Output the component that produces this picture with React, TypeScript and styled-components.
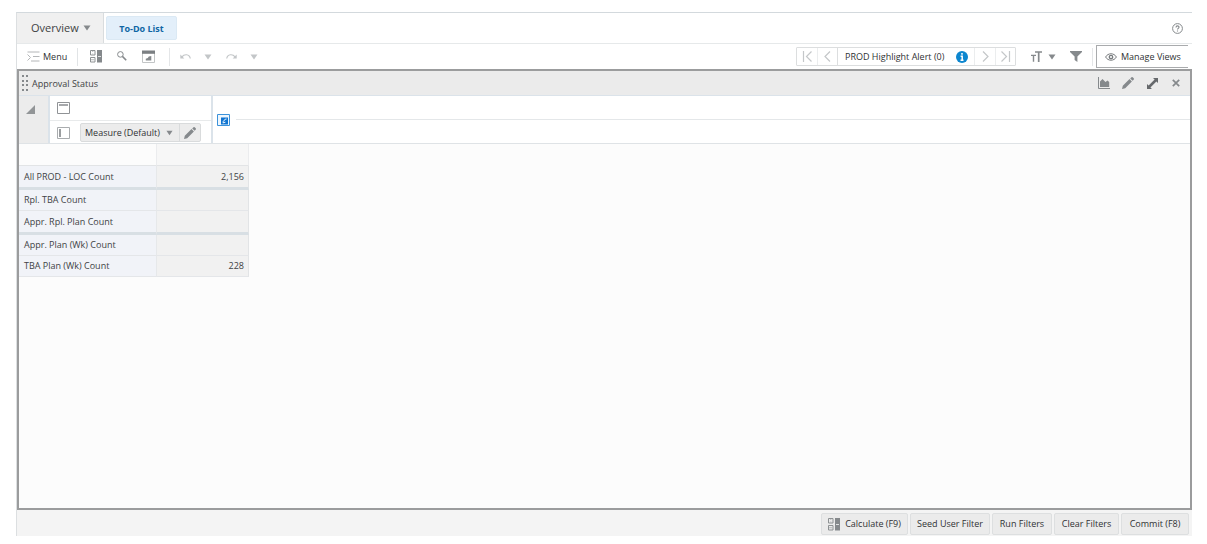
import React from "react";
import styled, { createGlobalStyle } from "styled-components";

const GlobalStyle = createGlobalStyle`
  *, *::before, *::after { box-sizing: border-box; }
  body {
    margin: 0;
    background: #fff;
    color: #404244;
    font: 9px/12px "Open Sans", "Noto Sans", sans-serif;
  }
  button, select { font: inherit; color: inherit; }
  svg { display: block; flex: none; }
`;

const Page = styled.div`
  display: flex;
  flex-direction: column;
  min-height: 100vh;
  padding: 12px 15px 8px 16px;
`;

const Workspace = styled.main`
  flex: 1;
  display: flex;
  flex-direction: column;
  border-top: 1px solid #d3d9dd;
  border-left: 1px solid #dcdfe1;
`;

const TabBar = styled.nav`
  display: flex;
  align-items: stretch;
  height: 31px;
  border-bottom: 1px solid #e6e9ea;
`;

const OverviewTab = styled.button`
  display: flex;
  align-items: center;
  gap: 4px;
  width: 87px;
  padding: 0 0 0 14px;
  border: 0;
  border-right: 1px solid #d9dcde;
  background: #f0f0f0;
  font-size: 11px;
  line-height: 16px;
  white-space: nowrap;
`;

const StepTab = styled.button`
  align-self: center;
  height: 24px;
  width: 71px;
  margin: 0 0 0 2px;
  padding: 2px 0 0;
  border: 1px solid #dbe9f4;
  border-radius: 2px;
  background: #e3effa;
  color: #1066a5;
  font-weight: 700;
  white-space: nowrap;
`;

const Spacer = styled.div`
  flex: 1;
`;

const IconButton = styled.button<{ $width?: number; $tone?: string }>`
  display: flex;
  align-items: center;
  justify-content: center;
  width: ${(p) => p.$width ?? 24}px;
  height: 22px;
  padding: 0;
  border: 0;
  background: none;
  color: ${(p) => p.$tone ?? "#85898c"};
`;

const HelpButton = styled(IconButton)`
  align-self: center;
  margin-right: 3px;
`;

const Toolbar = styled.div`
  display: flex;
  align-items: center;
  height: 25px;
`;

const MenuButton = styled.button`
  display: flex;
  align-items: center;
  gap: 3px;
  width: 61px;
  height: 18px;
  padding: 0 0 0 10px;
  border: 0;
  border-right: 1px solid #e1e4e6;
  background: none;
  color: #303234;
`;

const Divider = styled.span`
  width: 1px;
  height: 18px;
  background: #e4e6e8;
`;

const AlertPager = styled.div`
  display: flex;
  height: 19px;
  margin-right: 12px;
  border: 1px solid #dcdedf;
  border-radius: 1px;
  background: #fff;
`;

const PagerButton = styled.button`
  display: flex;
  align-items: center;
  justify-content: center;
  width: 20px;
  padding: 0;
  border: 0;
  background: none;
  color: #c4c7c9;
  & + & { border-left: 1px solid #ebedee; }
`;

const AlertLabel = styled.div`
  display: flex;
  align-items: center;
  justify-content: space-between;
  width: 138px;
  padding: 0 6px 0 7px;
  border-left: 1px solid #dcdedf;
  border-right: 1px solid #ebedee;
  color: #303234;
  white-space: nowrap;
`;

const ManageViews = styled.button`
  display: flex;
  align-items: center;
  gap: 4px;
  width: 92px;
  height: 23px;
  margin: 0 4px 0 3px;
  padding: 0 0 0 8px;
  border: 1px solid #a9abad;
  border-right: 0;
  background: #fff;
  color: #303234;
  white-space: nowrap;
`;

const Panel = styled.section`
  flex: 1;
  display: flex;
  flex-direction: column;
  border: 2px solid #9b9c9d;
  background: #fcfcfc;
`;

const PanelHeader = styled.header`
  display: flex;
  align-items: center;
  height: 25px;
  padding: 0 2px 0 3px;
  border-bottom: 1px solid #dbe3ea;
  background: #ebebeb;
`;

const PanelTitle = styled.h1`
  margin: 2px 0 0 4px;
  font-size: 9px;
  line-height: 12px;
  font-weight: 400;
`;

const AxisArea = styled.div`
  display: flex;
  height: 48px;
  border-bottom: 1px solid #dfe3e6;
  background: #fff;
`;

const Corner = styled.button`
  display: flex;
  align-items: flex-start;
  justify-content: flex-end;
  width: 31px;
  padding: 9px 13px 0 0;
  border: 0;
  border-right: 2px solid #dbe3ea;
  background: #ececec;
  color: #929597;
`;

const AxisRows = styled.div`
  width: 163px;
  border-right: 2px solid #dbe3ea;
`;

const AxisRow = styled.div`
  display: flex;
  align-items: center;
  gap: 10px;
  height: 24px;
  padding-left: 7px;
  color: #909396;
  & + & { border-top: 1px solid #e8eaeb; }
`;

const MeasureTile = styled.div`
  display: flex;
  height: 19px;
  border: 1px solid #d9dbdc;
  border-radius: 2px;
  background: #ececec;
  color: #303234;
`;

const MeasureButton = styled.button`
  display: flex;
  align-items: center;
  justify-content: space-between;
  width: 99px;
  padding: 0 6px 0 4px;
  border: 0;
  border-right: 1px solid #d9dbdc;
  background: none;
  white-space: nowrap;
`;

const PageAxis = styled.div`
  flex: 1;
  display: flex;
  align-items: center;
  gap: 6px;
  padding-left: 4px;
`;

const AxisLine = styled.span`
  flex: 1;
  height: 1px;
  background: #e4e7e9;
`;

const Grid = styled.table`
  width: 230px;
  border-collapse: separate;
  border-spacing: 0;
  table-layout: fixed;
`;

const LabelHead = styled.th`
  width: 138px;
  height: 22px;
  padding: 0;
  border-right: 1px solid #ebecee;
  border-bottom: 1px solid #e2e4e6;
`;

const ValueHead = styled(LabelHead)`
  width: 92px;
  background: #f7f7f7;
`;

const RowLabel = styled.th<{ $groupEnd?: boolean }>`
  height: ${(p) => (p.$groupEnd ? 24 : 21)}px;
  padding: 0 0 0 5px;
  border-right: 1px solid #e6e8ea;
  border-bottom: ${(p) => (p.$groupEnd ? "3px solid #d8dfe4" : "1px solid #e4e6e9")};
  background: #f1f3f8;
  font-weight: 400;
  text-align: left;
  white-space: nowrap;
`;

const RowValue = styled.td<{ $groupEnd?: boolean }>`
  padding: 0 4px 0 0;
  border-right: 1px solid #e2e4e6;
  border-bottom: ${(p) => (p.$groupEnd ? "3px solid #d8dfe4" : "1px solid #e4e6e9")};
  background: #f1f1f1;
  text-align: right;
`;

const Footer = styled.footer`
  display: flex;
  justify-content: flex-end;
  gap: 2px;
  height: 26px;
  padding: 3px 3px 1px;
  background: #f4f4f4;
`;

const ActionButton = styled.button<{ $width: number }>`
  display: flex;
  align-items: center;
  justify-content: center;
  gap: 4px;
  width: ${(p) => p.$width}px;
  padding: 0;
  border: 1px solid #dddfe0;
  border-radius: 2px;
  background: #ebebeb;
  color: #303234;
  white-space: nowrap;
`;

const IconTone = styled.span`
  color: #85898c;
`;

const TileEdit = styled(IconButton)`
  height: 17px;
`;

const Caret = ({ size = 8 }: { size?: number }) => (
  <svg width={size} height="6" viewBox="0 0 8 6">
    <path d="M0.5 0.5h7L4 5.5z" fill="currentColor" />
  </svg>
);

const CalculateIcon = () => (
  <svg width="13" height="13" viewBox="0 0 13 13" fill="none" stroke="#8d9193">
    <path d="M7 0h5v12.5H7z" fill="#85898c" stroke="none" />
    <path d="M0.5 0.5h4.5v4.5h-4.5zM0.5 7.5h4.5v4.5h-4.5z" />
    <path d="M2.75 1v1M2.75 3.5v1M1 9.75h3.5" stroke="#b4b7b9" />
    <path d="M8 6.5h3" stroke="#dfe1e2" />
  </svg>
);

const MenuIcon = () => (
  <svg width="13" height="11" viewBox="0 0 13 11" fill="none" stroke="#b4b6b8">
    <path d="M0.5 1h12M6 5.5h6.5M4 10h8.5M0.5 3.5l3 3-3 3" />
  </svg>
);

const SearchIcon = () => (
  <svg width="10" height="12" viewBox="0 0 10 12" fill="none" stroke="currentColor">
    <circle cx="3.4" cy="3.4" r="2.8" />
    <path d="M5.4 5.4l3.8 3.8" strokeWidth="1.6" />
  </svg>
);

const DashboardIcon = () => (
  <svg width="13" height="13" viewBox="0 0 13 13" fill="none">
    <path d="M0.5 3v9.5h12V3" stroke="#c2c5c6" />
    <path d="M0 0.5h13V3.8H0z" fill="#7b7f82" />
    <path d="M3.8 10.5V8.8l2-.8 1-1.5L9.3 6v4.5z" fill="#85898c" />
  </svg>
);

const UndoIcon = ({ flip = false }: { flip?: boolean }) => (
  <svg width="11" height="7" viewBox="0 0 11 7" fill="none" stroke="currentColor">
    <g transform={flip ? "matrix(-1 0 0 1 11 0)" : undefined}>
      <path d="M2 3.8C4 1 9.4.6 10.3 5.5" strokeWidth="1.2" />
      <path d="M0.3 1.5v4h4z" fill="currentColor" stroke="none" />
    </g>
  </svg>
);

const ChevronIcon = ({ bar = false, flip = false }: { bar?: boolean; flip?: boolean }) => (
  <svg width="11" height="11" viewBox="0 0 11 11" fill="none" stroke="currentColor" strokeWidth="1.2">
    <g transform={flip ? "matrix(-1 0 0 1 11 0)" : undefined}>
      <path d={bar ? "M9.5 0.5l-5 5 5 5M1.5 0v11" : "M8 0.5l-5 5 5 5"} />
    </g>
  </svg>
);

const InfoIcon = () => (
  <svg width="12" height="12" viewBox="0 0 12 12">
    <circle cx="6" cy="6" r="6" fill="#0c86cf" />
    <path d="M6 2v1.8M4.6 5.2H6.2V9M4.5 9.2h3" stroke="#fff" strokeWidth="1.5" fill="none" />
  </svg>
);

const HelpIcon = () => (
  <svg width="11" height="11" viewBox="0 0 11 11" fill="none" stroke="currentColor">
    <circle cx="5.5" cy="5.5" r="4.9" />
    <path d="M4 4.4C4 2.4 7 2.5 7 4.2c0 1.1-1.5 1.2-1.5 2.3M5.5 7.4v1.1" strokeWidth="1.1" />
  </svg>
);

const TextSizeIcon = () => (
  <svg width="11" height="11" viewBox="0 0 11 11" fill="none" stroke="currentColor">
    <path d="M4 1h7M7.7 1v10" strokeWidth="1.7" />
    <path d="M0 4.4h5M2.5 4.4v6.4" strokeWidth="1.4" />
  </svg>
);

const FilterIcon = () => (
  <svg width="12" height="11" viewBox="0 0 12 11">
    <path d="M0 0h12v1L7.4 5.6V11L4.6 9V5.6L0 1z" fill="currentColor" />
  </svg>
);

const EyeIcon = () => (
  <svg width="12" height="8" viewBox="0 0 12 8" fill="none" stroke="#777b7e">
    <path d="M0.6 4C3-.3 9-.3 11.4 4 9 8.3 3 8.3 .6 4z" />
    <circle cx="6" cy="4" r="1.7" strokeWidth="1.3" />
  </svg>
);

const ChartIcon = () => (
  <svg width="12" height="12" viewBox="0 0 12 12">
    <path d="M0.5 0v11.5H12" fill="none" stroke="currentColor" />
    <path d="M2 10V4.5L4.5 2 7.5 5 9.5 3.5l1.7 1.5V10z" fill="currentColor" />
  </svg>
);

const PencilIcon = () => (
  <svg width="12" height="12" viewBox="0 0 12 12" fill="currentColor">
    <path d="M0 12l.8-3.2L7.5 2.1l2.4 2.4L3.2 11.2zM8.2 1.4L9.5.2q.6-.4 1.2.1l1 1q.5.6.1 1.2L10.6 3.8z" />
  </svg>
);

const ExpandIcon = () => (
  <svg width="11" height="11" viewBox="0 0 11 11" fill="currentColor">
    <path d="M6 0h5v5L9.4 3.4 3.4 9.4 5 11H0V6l1.6 1.6 6-6z" />
  </svg>
);

const CloseIcon = () => (
  <svg width="8" height="8" viewBox="0 0 8 8" fill="none" stroke="currentColor" strokeWidth="1.7">
    <path d="M0.8 0.8l6.4 6.4M7.2 0.8L0.8 7.2" />
  </svg>
);

const GripIcon = () => (
  <svg width="6" height="16" viewBox="0 0 6 16" fill="#85898c">
    {[0, 5, 9, 14].map((y) => (
      <path key={y} d={`M0 ${y}h2v2H0zM4 ${y}h2v2H4z`} />
    ))}
  </svg>
);

const CornerIcon = () => (
  <svg width="9" height="9" viewBox="0 0 9 9">
    <path d="M9 0v9H0z" fill="currentColor" />
  </svg>
);

const ColumnAxisIcon = () => (
  <svg width="13" height="12" viewBox="0 0 13 12" fill="none" stroke="currentColor">
    <path d="M0.5 0.5h12v11H0.5z" />
    <path d="M2 3h9" strokeWidth="1.6" />
  </svg>
);

const RowAxisIcon = () => (
  <svg width="13" height="12" viewBox="0 0 13 12" fill="none" stroke="currentColor">
    <path d="M0.5 0.5h12v11H0.5z" stroke="#a9acae" />
    <path d="M3 2v8" strokeWidth="1.8" />
  </svg>
);

const PageAxisIcon = () => (
  <svg width="13" height="12" viewBox="0 0 13 12" fill="none">
    <path d="M0.5 0.5h12v11H0.5z" fill="#eef6fd" stroke="#3b92da" />
    <path d="M4 3.5h7v7H4z" fill="#0f74d1" />
    <path d="M6.2 9.3V7.5L8.5 5h1M6.5 8.6L8.4 8.2" stroke="#fff" />
  </svg>
);

const rows = [
  { label: "All PROD - LOC Count", value: "2,156", groupEnd: true },
  { label: "Rpl. TBA Count", value: "" },
  { label: "Appr. Rpl. Plan Count", value: "", groupEnd: true },
  { label: "Appr. Plan (Wk) Count", value: "" },
  { label: "TBA Plan (Wk) Count", value: "228" },
];

const FADED = "#c3c6c8";

export default function App() {
  return (
    <>
      <GlobalStyle />
      <Page>
        <Workspace>
          <TabBar>
            <OverviewTab>
              Overview
              <IconTone><Caret /></IconTone>
            </OverviewTab>
            <StepTab>To-Do List</StepTab>
            <Spacer />
            <HelpButton aria-label="Help"><HelpIcon /></HelpButton>
          </TabBar>
          <Toolbar>
            <MenuButton><MenuIcon />Menu</MenuButton>
            <IconButton $width={37} aria-label="Calculate"><CalculateIcon /></IconButton>
            <IconButton $width={13} aria-label="Find"><SearchIcon /></IconButton>
            <IconButton $width={41} aria-label="Dashboard"><DashboardIcon /></IconButton>
            <Divider />
            <IconButton $width={30} $tone={FADED} aria-label="Undo"><UndoIcon /></IconButton>
            <IconButton $width={16} $tone={FADED} aria-label="Undo history"><Caret /></IconButton>
            <IconButton $width={30} $tone={FADED} aria-label="Redo"><UndoIcon flip /></IconButton>
            <IconButton $width={16} $tone={FADED} aria-label="Redo history"><Caret /></IconButton>
            <Spacer />
            <AlertPager>
              <PagerButton aria-label="First alert"><ChevronIcon bar /></PagerButton>
              <PagerButton aria-label="Previous alert"><ChevronIcon /></PagerButton>
              <AlertLabel>PROD Highlight Alert (0)<InfoIcon /></AlertLabel>
              <PagerButton aria-label="Next alert"><ChevronIcon flip /></PagerButton>
              <PagerButton aria-label="Last alert"><ChevronIcon bar flip /></PagerButton>
            </AlertPager>
            <IconButton $width={16} aria-label="Text size"><TextSizeIcon /></IconButton>
            <IconButton $width={16} aria-label="Text size options"><Caret /></IconButton>
            <IconButton $width={32} aria-label="Filter"><FilterIcon /></IconButton>
            <Divider />
            <ManageViews><EyeIcon />Manage Views</ManageViews>
          </Toolbar>
          <Panel>
            <PanelHeader>
              <GripIcon />
              <PanelTitle>Approval Status</PanelTitle>
              <Spacer />
              <IconButton aria-label="Chart"><ChartIcon /></IconButton>
              <IconButton aria-label="Edit"><PencilIcon /></IconButton>
              <IconButton $tone="#66696c" aria-label="Expand"><ExpandIcon /></IconButton>
              <IconButton aria-label="Close"><CloseIcon /></IconButton>
            </PanelHeader>
            <AxisArea>
              <Corner aria-label="Select all"><CornerIcon /></Corner>
              <AxisRows>
                <AxisRow><ColumnAxisIcon /></AxisRow>
                <AxisRow>
                  <RowAxisIcon />
                  <MeasureTile>
                    <MeasureButton>
                      Measure (Default)
                      <IconTone><Caret size={7} /></IconTone>
                    </MeasureButton>
                    <TileEdit $width={20} aria-label="Edit measures"><PencilIcon /></TileEdit>
                  </MeasureTile>
                </AxisRow>
              </AxisRows>
              <PageAxis><PageAxisIcon /><AxisLine /></PageAxis>
            </AxisArea>
            <Grid>
              <thead>
                <tr><LabelHead /><ValueHead /></tr>
              </thead>
              <tbody>
                {rows.map((r) => (
                  <tr key={r.label}>
                    <RowLabel scope="row" $groupEnd={r.groupEnd}>{r.label}</RowLabel>
                    <RowValue $groupEnd={r.groupEnd}>{r.value}</RowValue>
                  </tr>
                ))}
              </tbody>
            </Grid>
          </Panel>
          <Footer>
            <ActionButton $width={87}><CalculateIcon />Calculate (F9)</ActionButton>
            <ActionButton $width={80}>Seed User Filter</ActionButton>
            <ActionButton $width={60}>Run Filters</ActionButton>
            <ActionButton $width={65}>Clear Filters</ActionButton>
            <ActionButton $width={68}>Commit (F8)</ActionButton>
          </Footer>
        </Workspace>
      </Page>
    </>
  );
}
